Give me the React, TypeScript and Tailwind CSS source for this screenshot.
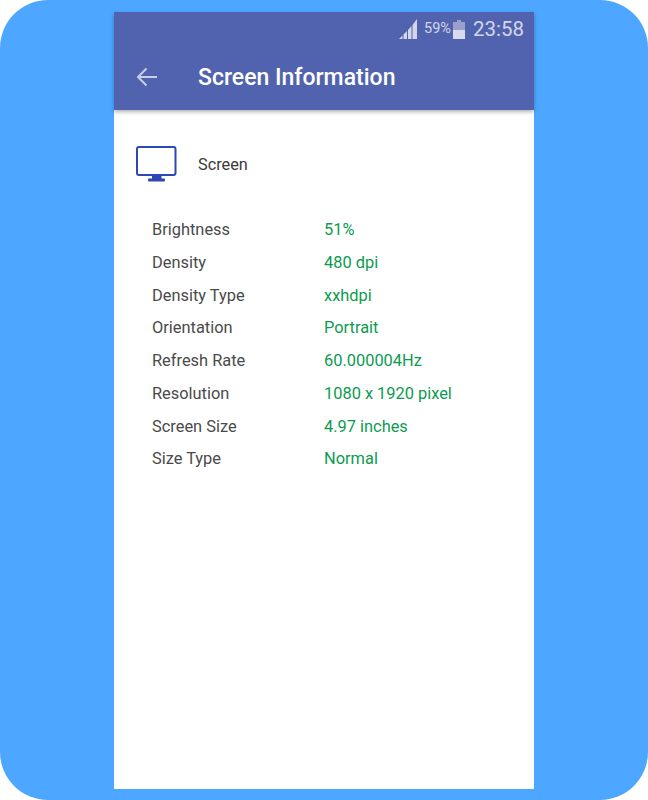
const rows = [
  ['Brightness', '51%'],
  ['Density', '480 dpi'],
  ['Density Type', 'xxhdpi'],
  ['Orientation', 'Portrait'],
  ['Refresh Rate', '60.000004Hz'],
  ['Resolution', '1080 x 1920 pixel'],
  ['Screen Size', '4.97 inches'],
  ['Size Type', 'Normal'],
];

const StatusBar = () => (
  <div className="h-[33px] flex items-center justify-end pr-[10px] pt-[1px] text-[#d3d6ea]">
    <svg width="18" height="20" viewBox="0 0 18 20" className="mr-[7px]" fill="#d3d6ea">
      <path d="M0 20l3.5-3.500V20z" />
      <path d="M4.500 15.500l3.500-3.500v8H4.500z" />
      <path d="M9 11l3.500-4v13H9z" />
      <path d="M13.500 6L18 0v20h-4.500z" />
    </svg>
    <span className="text-[14.5px] leading-none mr-[2px]">59%</span>
    <svg width="12" height="19" viewBox="0 0 12 19" className="mr-[8px]">
      <rect x="4" y="0" width="4" height="2" fill="#9a9fcb" />
      <rect x="0" y="2" width="12" height="8" fill="#9a9fcb" />
      <rect x="0" y="10" width="12" height="9" fill="#d9dbec" />
    </svg>
    <span className="text-[20.5px] leading-none">23:58</span>
  </div>
);

const MonitorIcon = () => (
  <svg width="41" height="36" viewBox="0 0 41 36" fill="none">
    <rect x="1" y="1" width="38.500" height="28" rx="2" stroke="#2d48b4" strokeWidth="2" />
    <path d="M16 30h9.500v3H16z" fill="#2d48b4" />
    <rect x="12" y="32.500" width="17" height="3" rx="1" fill="#2d48b4" />
  </svg>
);

export default function App() {
  return (
    <div className="w-[648px] h-[800px] bg-white overflow-hidden font-['Roboto',sans-serif]">
      <div className="w-[648px] h-[800px] bg-[#4da6ff] rounded-[48px] pt-[12px] pl-[114px]">
        <div className="w-[420px] h-[777px] bg-white flex flex-col">
          <div className="h-[98px] bg-[#5163ae] shadow-[0_2px_4px_rgba(0,0,0,0.3)]">
            <StatusBar />
            <div className="flex items-center h-[65px] pb-[2px]">
              <svg width="24" height="24" viewBox="0 0 24 24" fill="none" stroke="#c9cde6" strokeWidth="2" className="ml-[21px] mr-[39px]">
                <path d="M22 12H3M11.500 3.500L3 12l8.500 8.500" />
              </svg>
              <span className="text-[23px] font-medium text-white leading-none pt-[2px]">Screen Information</span>
            </div>
          </div>
          <div className="flex items-center pl-[22px] mt-[36px]">
            <MonitorIcon />
            <span className="ml-[21px] pt-[2px] text-[16.3px] text-[#3a3a3a]">Screen</span>
          </div>
          <div className="mt-[32px] pl-[38px] flex flex-col">
            {rows.map(([label, value]) => (
              <div key={label} className="flex h-[32.75px] items-center text-[16.4px] leading-none">
                <span className="w-[172px] text-[#4a4a4a]">{label}</span>
                <span className="text-[#0c9b50]">{value}</span>
              </div>
            ))}
          </div>
        </div>
      </div>
    </div>
  );
}
